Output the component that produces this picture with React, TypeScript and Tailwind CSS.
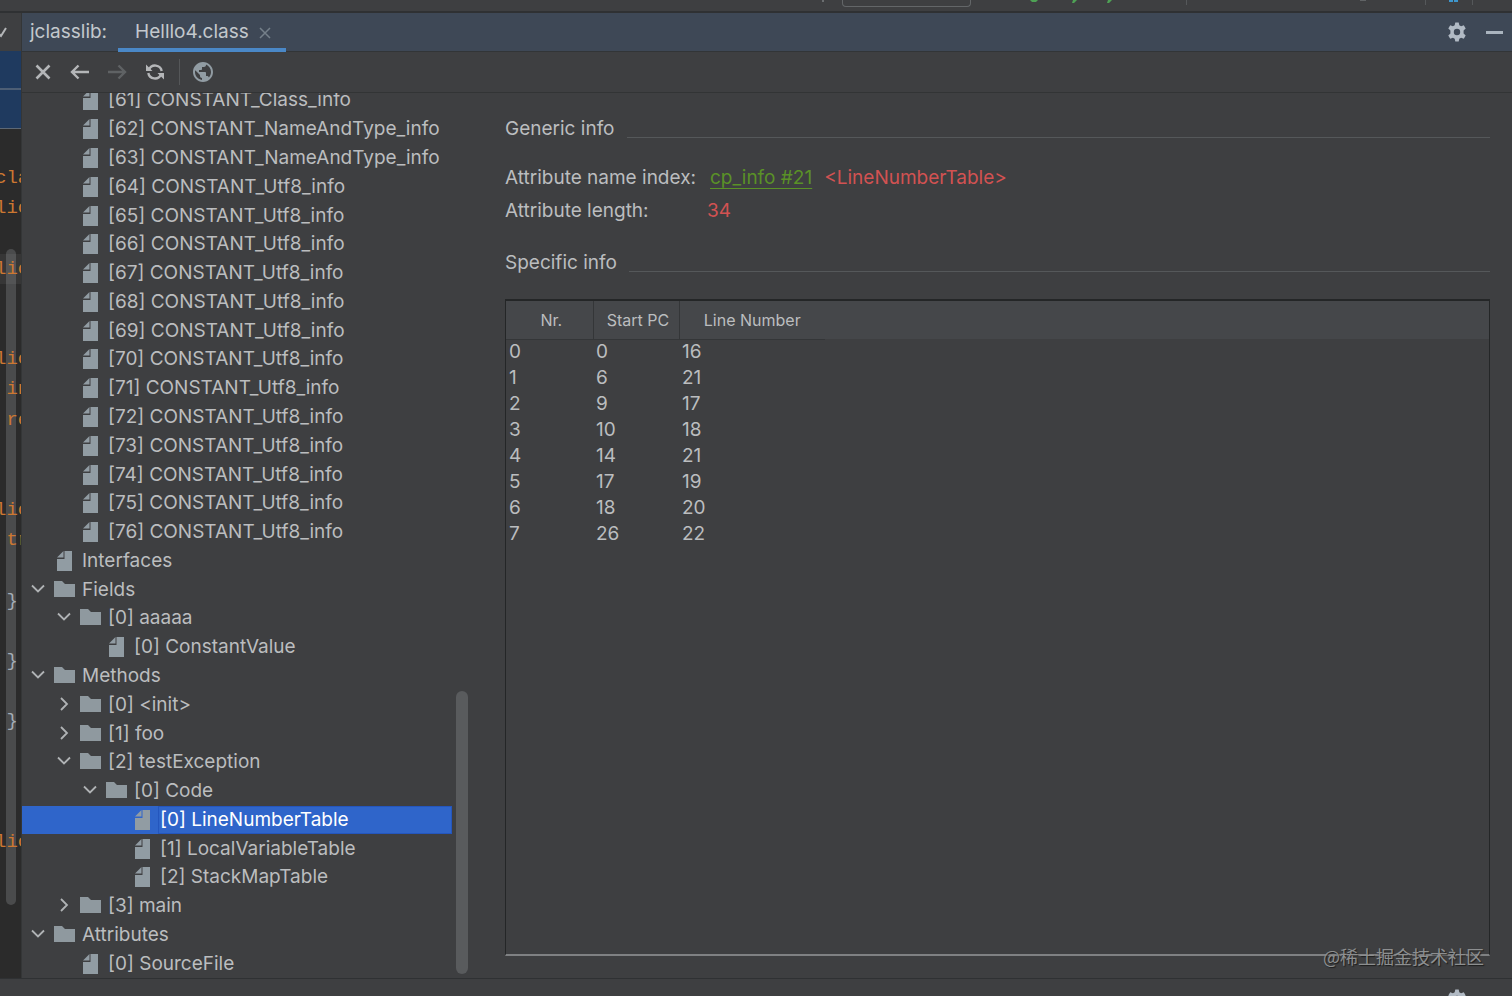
import { useState } from 'react';
import clsx from 'clsx';
import { MdPublic } from 'react-icons/md';

type NodeKind = 'file' | 'folder';

interface TreeNode {
  label: string;
  level: number;
  kind: NodeKind;
  open?: boolean;
}

const constants: TreeNode[] = [
  '[61] CONSTANT_Class_info',
  '[62] CONSTANT_NameAndType_info',
  '[63] CONSTANT_NameAndType_info',
  ...Array.from({ length: 13 }, (_, i) => `[${64 + i}] CONSTANT_Utf8_info`),
].map((label) => ({ label, level: 1, kind: 'file' }));

const nodes: TreeNode[] = [
  ...constants,
  { label: 'Interfaces', level: 0, kind: 'file' },
  { label: 'Fields', level: 0, kind: 'folder', open: true },
  { label: '[0] aaaaa', level: 1, kind: 'folder', open: true },
  { label: '[0] ConstantValue', level: 2, kind: 'file' },
  { label: 'Methods', level: 0, kind: 'folder', open: true },
  { label: '[0] <init>', level: 1, kind: 'folder', open: false },
  { label: '[1] foo', level: 1, kind: 'folder', open: false },
  { label: '[2] testException', level: 1, kind: 'folder', open: true },
  { label: '[0] Code', level: 2, kind: 'folder', open: true },
  { label: '[0] LineNumberTable', level: 3, kind: 'file' },
  { label: '[1] LocalVariableTable', level: 3, kind: 'file' },
  { label: '[2] StackMapTable', level: 3, kind: 'file' },
  { label: '[3] main', level: 1, kind: 'folder', open: false },
  { label: 'Attributes', level: 0, kind: 'folder', open: true },
  { label: '[0] SourceFile', level: 1, kind: 'file' },
];

const lineNumbers = [
  [0, 0, 16],
  [1, 6, 21],
  [2, 9, 17],
  [3, 10, 18],
  [4, 14, 21],
  [5, 17, 19],
  [6, 18, 20],
  [7, 26, 22],
];

// visible slice of the editor, one entry per line
const codeLines = [
  'cla', 'lic', '', 'lic', '', '', 'lic', ' in', ' re', '', '', 'lic', ' tr', '',
  ' }', '', ' }', '', ' }', '', '', '', 'lic', '', '', '', '',
];

const indents = ['pl-[10px]', 'pl-[36px]', 'pl-[62px]', 'pl-[88px]'];

function FileIcon() {
  return (
    <svg width="15" height="20" viewBox="0 0 15 20" fill="#919ca3" className="ml-[3px]">
      <path d="M7.500 0H15v20H0V8h7.500z" />
      <path d="M6.500 0v6.500H0z" />
    </svg>
  );
}

function FolderIcon() {
  return (
    <svg width="21" height="16" viewBox="0 0 21 16" fill="#8f999f" className="mb-[2px]">
      <path d="M0 0h8l3 3h10v13H0z" />
    </svg>
  );
}

function Chevron({ open }: { open: boolean }) {
  return (
    <svg width="14" height="16" viewBox="0 0 14 16" fill="none" stroke="#b0b3b5" strokeWidth="1.8">
      <path d={open ? 'M1 3.5l6 6 6-6' : 'M4 1l6 6-6 6'} />
    </svg>
  );
}

function GearIcon() {
  return (
    <svg width="20" height="20" viewBox="0 0 20 20" fill="#b1bac4">
      <path
        fillRule="evenodd"
        d="M8.300.5h3.400l.6 2.700 1.800 1 2.700-.9 1.900 3.300-2.100 1.900v3l2.100 1.900-1.900 3.300-2.700-.9-1.800 1-.6 2.700H8.300l-.6-2.700-1.800-1-2.700.9-1.900-3.300 2.100-1.900v-3L1.300 6.600l1.900-3.300 2.700.9 1.800-1zM10 6.800a3.200 3.200 0 1 0 0 6.400 3.200 3.200 0 0 0 0-6.400z"
      />
    </svg>
  );
}

function EditorStrip() {
  return (
    <div className="flex w-[21px] shrink-0 flex-col overflow-hidden bg-[#2b2b2b]">
      <div className="flex h-[38px] shrink-0 items-center bg-[#3e3f41]">
        <svg width="8" height="14" viewBox="0 0 8 14" fill="none" stroke="#b4b6b8" strokeWidth="2">
          <path d="M-1 9l2 2 5-8" />
        </svg>
      </div>
      <div className="h-[39px] shrink-0 border-b-2 border-[#4d5e75] bg-[#1f3a5f]" />
      <div className="h-[39px] shrink-0 border-b border-[#5d6875] bg-[#1f3a5f]" />
      <div className="relative flex flex-1 flex-col pt-[34px]">
        <div className="absolute top-[120px] bottom-[73px] left-[6px] w-[10px] rounded-full bg-[#4a4b4c]" />
        {codeLines.map((line, i) => (
          <div
            key={i}
            className={clsx(
              "relative flex flex-1 items-center overflow-hidden font-['Liberation_Mono',monospace] text-[19px] leading-6",
              line.includes('}') ? 'text-[#a4acb4]' : 'text-[#cc7832]',
              i === 3 && 'bg-white/5'
            )}
          >
            <span className="-ml-[5px] whitespace-pre">{line}</span>
          </div>
        ))}
      </div>
    </div>
  );
}

function TitleBar() {
  return (
    <header className="flex h-[39px] shrink-0 items-stretch border-b border-[#323537] bg-[#3e4856] pr-[9px] text-[19px] text-[#c3c8cd]">
      <span className="flex items-center pl-2">jclasslib:</span>
      <div className="-mb-px ml-[11px] flex w-[168px] items-center border-b-4 border-[#4a88c7] pt-1 pl-[17px]">
        <button type="button" className="whitespace-nowrap">Helllo4.class</button>
        <button type="button" aria-label="Close tab" className="ml-[10px]">
          <svg width="12" height="12" viewBox="0 0 12 12" stroke="#75808a" strokeWidth="1.5">
            <path d="M1 1l10 10M11 1L1 11" />
          </svg>
        </button>
      </div>
      <div className="ml-auto flex items-center gap-[19px]">
        <button type="button" aria-label="Settings"><GearIcon /></button>
        <button type="button" aria-label="Hide" className="h-[3px] w-[17px] bg-[#aab4be]" />
      </div>
    </header>
  );
}

function Toolbar() {
  return (
    <div className="flex h-[41px] shrink-0 items-center border-b border-[#323435] pl-[13px]">
      <button type="button" aria-label="Close">
        <svg width="16" height="16" viewBox="0 0 16 16" stroke="#b4b6b8" strokeWidth="2.6">
          <path d="M1.5 1.5l13 13M14.500 1.500l-13 13" />
        </svg>
      </button>
      <button type="button" aria-label="Back" className="ml-[19px]">
        <svg width="19" height="16" viewBox="0 0 19 16" fill="none" stroke="#b4b6b8" strokeWidth="2.4">
          <path d="M19 8H2M8.500 1.500L2 8l6.500 6.500" />
        </svg>
      </button>
      <button type="button" aria-label="Forward" disabled className="ml-[19px]">
        <svg width="19" height="16" viewBox="0 0 19 16" fill="none" stroke="#5f6264" strokeWidth="2.4">
          <path d="M0 8h17M10.500 1.500L17 8l-6.500 6.500" />
        </svg>
      </button>
      <button type="button" aria-label="Reload" className="ml-[19px]">
        <svg width="18" height="18" viewBox="0 0 18 18" fill="none" stroke="#b4b6b8" strokeWidth="2.4">
          <path d="M3 6.500A6.700 6.700 0 0 1 15.700 8M15 11.500A6.700 6.700 0 0 1 2.300 10" />
          <path d="M0 1.500V8h6.500zM18 16.500V10h-6.500z" fill="#b4b6b8" stroke="none" />
        </svg>
      </button>
      <div className="ml-[15px] h-[26px] w-px bg-[#555759]" />
      <button type="button" aria-label="Open in browser" className="ml-[11px]">
        <MdPublic size={24} color="#919ca3" />
      </button>
    </div>
  );
}

function ClassTree() {
  const [selected, setSelected] = useState('[0] LineNumberTable');

  return (
    <nav className="flex w-[447px] shrink-0 overflow-hidden">
      <ul className="-mt-[7px] flex w-[430px] flex-col">
        {nodes.map((node) => {
          const active = node.label === selected;
          return (
            <li
              key={node.label}
              className={clsx(
                'flex min-h-0 flex-1 items-center',
                indents[node.level],
                active ? 'bg-[#2f65ca] text-white' : 'text-[#bbbdbf]'
              )}
            >
              <span className="flex w-[22px] shrink-0">
                {node.kind === 'folder' && (
                  <button type="button" aria-label={`Toggle ${node.label}`} className="-ml-px">
                    <Chevron open={!!node.open} />
                  </button>
                )}
              </span>
              <span className="w-[26px] shrink-0">
                {node.kind === 'folder' ? <FolderIcon /> : <FileIcon />}
              </span>
              <button
                type="button"
                onClick={() => setSelected(node.label)}
                className={clsx(
                  'flex flex-1 items-center self-stretch border pl-px text-left text-[19px] leading-6 whitespace-nowrap',
                  active ? 'border-[#2456bd]' : 'border-transparent'
                )}
              >
                {node.label}
              </button>
            </li>
          );
        })}
      </ul>
      <div className="mt-[598px] mb-[4px] ml-[4px] w-[12px] rounded-full bg-[#595b5d]" />
    </nav>
  );
}

function SectionTitle({ children }: { children: string }) {
  return (
    <div className="flex h-6 items-center gap-3">
      <h2>{children}</h2>
      <div className="mt-[17px] h-px flex-1 bg-[#55585a]" />
    </div>
  );
}

function Detail() {
  return (
    <main className="flex flex-1 flex-col pt-[24px] pr-[22px] pb-[22px] pl-[36px] text-[19px] leading-6 text-[#bbbdbf]">
      <SectionTitle>Generic info</SectionTitle>
      <dl className="mt-[25px] grid grid-cols-[202px_1fr] gap-y-[9px]">
        <dt>Attribute name index:</dt>
        <dd className="flex gap-[12px] pl-[3px]">
          <a href="#cp21" className="text-[#5a9127] underline underline-offset-4">cp_info #21</a>
          <span className="text-[#d25252]">&lt;LineNumberTable&gt;</span>
        </dd>
        <dt>Attribute length:</dt>
        <dd className="text-[#d25252]">34</dd>
      </dl>
      <div className="mt-[28px]">
        <SectionTitle>Specific info</SectionTitle>
      </div>
      <div className="mt-[24px] flex-1 border-2 border-r border-b-2 border-l border-[#242627] border-b-[#7f8183]">
        <table className="w-full table-fixed border-collapse">
          <thead className="bg-[#45474a] text-[16px]">
            <tr className="h-[38px]">
              <th className="w-[87px] border-r border-b border-[#343638] pl-1 font-normal">Nr.</th>
              <th className="w-[86px] border-r border-b border-[#343638] pl-1 font-normal">Start PC</th>
              <th className="w-[146px] border-b border-[#343638] font-normal">Line Number</th>
              <th aria-hidden="true" />
            </tr>
          </thead>
          <tbody>
            {lineNumbers.map(([nr, startPc, line]) => (
              <tr key={nr} className="h-[26px]">
                <td className="p-0 pl-[3px]">{nr}</td>
                <td className="p-0 pl-[3px]">{startPc}</td>
                <td className="p-0 pl-[3px]">{line}</td>
                <td />
              </tr>
            ))}
          </tbody>
        </table>
      </div>
    </main>
  );
}

function MainToolbarEdge() {
  return (
    <div className="flex h-[13px] shrink-0 items-start border-b-2 border-[#2f3133] pr-[39px]">
      <div className="ml-auto flex items-start">
        <div className="h-[2px] w-[2px] bg-[#6b6e70]" />
        <div className="ml-[18px] h-[7px] w-[129px] rounded-b border border-t-0 border-[#636668]" />
        <svg width="90" height="3" viewBox="0 0 90 3" fill="#4ea155" className="ml-[57px]">
          <path d="M2 0h8l-2 2H4zM45 0h4l-3 3h-2zM80 0h4l-3 3h-2z" />
        </svg>
        <div className="ml-[68px] h-[5px] w-px bg-[#55585a]" />
        <div className="ml-[173px] h-px w-[6px] bg-[#606365]" />
        <div className="ml-[59px] h-[5px] w-px bg-[#55585a]" />
        <div className="ml-[23px] h-[2px] w-[4px] bg-[#3e96cc]" />
        <div className="ml-px h-[2px] w-[4px] bg-[#3e96cc]" />
        <div className="ml-[14px] h-[5px] w-px bg-[#55585a]" />
      </div>
    </div>
  );
}

export default function App() {
  return (
    <div className="relative flex h-screen flex-col overflow-hidden bg-[#3e3f41] font-['Inter','Noto_Sans_CJK_SC',sans-serif]">
      <MainToolbarEdge />
      <div className="flex min-h-0 flex-1">
        <EditorStrip />
        <section className="flex min-w-0 flex-1 flex-col border-l border-[#343637]">
          <TitleBar />
          <Toolbar />
          <div className="flex min-h-0 flex-1">
            <ClassTree />
            <Detail />
          </div>
        </section>
      </div>
      <footer className="flex h-[18px] shrink-0 justify-end overflow-hidden border-t border-[#2f3133] pt-[10px] pr-[45px]">
        <button type="button" aria-label="Status settings" className="h-5">
          <GearIcon />
        </button>
      </footer>
      <div className="absolute right-[28px] bottom-[28px] font-['Noto_Sans_CJK_SC',sans-serif] text-[18px] leading-6 text-[#8d8f90] [text-shadow:1px_1px_1px_#1c1c1c]">
        @稀土掘金技术社区
      </div>
    </div>
  );
}
